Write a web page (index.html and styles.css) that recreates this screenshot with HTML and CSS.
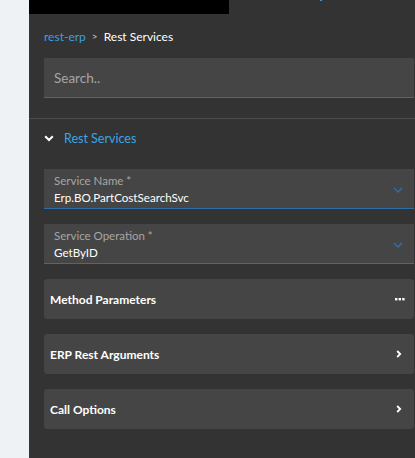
FILE: index.html
```html
<!DOCTYPE html>
<html>
<head>
<meta charset="utf-8">
<link rel="stylesheet" href="styles.css">
</head>
<body>
<div class="strip"></div>
<div class="panel">
  <div class="topbar">
    <div class="blackbox"></div>
    <div class="dot"></div>
  </div>
  <div class="crumbs">
    <span class="crumb-link">rest-erp</span>
    <span class="crumb-sep">&gt;</span>
    <span class="crumb-cur">Rest Services</span>
  </div>
  <div class="search">Search..</div>
  <div class="divider"></div>
  <div class="section-head">
    <svg class="chev-down" width="10" height="7" viewBox="0 0 10 7"><path d="M1.2 1.2 L5 5 L8.8 1.2" fill="none" stroke="#fff" stroke-width="2"/></svg>
    <span>Rest Services</span>
  </div>
  <div class="field">
    <div class="field-text">
      <div class="field-label">Service Name *</div>
      <div class="field-value">Erp.BO.PartCostSearchSvc</div>
    </div>
    <svg class="dd" width="10" height="6" viewBox="0 0 10 6"><path d="M1 1 L5 5 L9 1" fill="none" stroke="#2f6ea6" stroke-width="1.5"/></svg>
  </div>
  <div class="field">
    <div class="field-text">
      <div class="field-label">Service Operation *</div>
      <div class="field-value">GetByID</div>
    </div>
    <svg class="dd" width="10" height="6" viewBox="0 0 10 6"><path d="M1 1 L5 5 L9 1" fill="none" stroke="#2f6ea6" stroke-width="1.5"/></svg>
  </div>
  <div class="card">
    <span>Method Parameters</span>
    <svg class="dots" width="10" height="3" viewBox="0 0 10 3"><rect x="0" y="0" width="2.4" height="2.4" fill="#fff"/><rect x="3.6" y="0" width="2.4" height="2.4" fill="#fff"/><rect x="7.2" y="0" width="2.4" height="2.4" fill="#fff"/></svg>
  </div>
  <div class="card">
    <span>ERP Rest Arguments</span>
    <svg class="chev-right" width="6" height="8" viewBox="0 0 6 8"><path d="M1.2 1 L4.2 4 L1.2 7" fill="none" stroke="#fff" stroke-width="1.8"/></svg>
  </div>
  <div class="card">
    <span>Call Options</span>
    <svg class="chev-right" width="6" height="8" viewBox="0 0 6 8"><path d="M1.2 1 L4.2 4 L1.2 7" fill="none" stroke="#fff" stroke-width="1.8"/></svg>
  </div>
</div>
</body>
</html>
```
FILE: styles.css
```css
html, body {
  margin: 0;
  padding: 0;
  height: 458px;
  overflow: hidden;
}
body {
  display: flex;
  font-family: Lato, "Open Sans", sans-serif;
  background: #333333;
}
.strip {
  width: 29px;
  flex: none;
  background: #eef2f5;
}
.panel {
  flex: 1;
  background: #333333;
  display: flex;
  flex-direction: column;
  min-width: 0;
}
.topbar {
  height: 14px;
  display: flex;
  align-items: flex-start;
}
.blackbox {
  width: 200px;
  height: 14px;
  background: #000;
}
.dot {
  width: 2px;
  height: 1px;
  margin-left: 91px;
  background: #4a8fd0;
}
.crumbs {
  margin-top: 14px;
  padding-left: 15px;
  height: 16px;
  display: flex;
  align-items: center;
  gap: 6px;
  font-size: 12px;
}
.crumb-link { color: #3c9fe0; }
.crumb-sep { color: #cccccc; font-size: 10px; }
.crumb-cur { color: #ffffff; }
.search {
  margin: 14px 1px 0 15px;
  height: 39px;
  background: #454545;
  border-bottom: 1px solid #2e6fa7;
  display: flex;
  align-items: center;
  padding-left: 10px;
  color: #a6a6a6;
  font-size: 13.5px;
}
.divider {
  margin-top: 20px;
  height: 1px;
  background: #4d4d4d;
}
.section-head {
  height: 38px;
  display: flex;
  align-items: center;
  padding-left: 15px;
  gap: 10px;
  color: #3aa6e6;
  font-size: 12.5px;
}
.chev-down { flex: none; }
.field {
  margin: 12px 1px 3px 15px;
  height: 39px;
  background: #454545;
  border-bottom: 1px solid #2e6fa7;
  display: flex;
  align-items: center;
  padding: 0 11px 0 10px;
}
.field-text {
  flex: 1;
  display: flex;
  flex-direction: column;
  gap: 2px;
  padding-top: 1px;
}
.field-label {
  color: #a6a6a6;
  font-size: 11.5px;
  line-height: 14px;
}
.field-value {
  color: #ffffff;
  font-size: 11.6px;
  line-height: 15px;
}
.dd { flex: none; margin-top: 2px; }
.card {
  margin: 15px 1px 0 15px;
  height: 40px;
  border-radius: 3px;
  background: #454545;
  display: flex;
  align-items: center;
  justify-content: space-between;
  padding: 0 9px 0 6px;
  color: #ffffff;
  font-size: 12px;
  font-weight: bold;
}
.field + .card { margin-top: 12px; }
.chev-right { margin-right: 3px; }
```
